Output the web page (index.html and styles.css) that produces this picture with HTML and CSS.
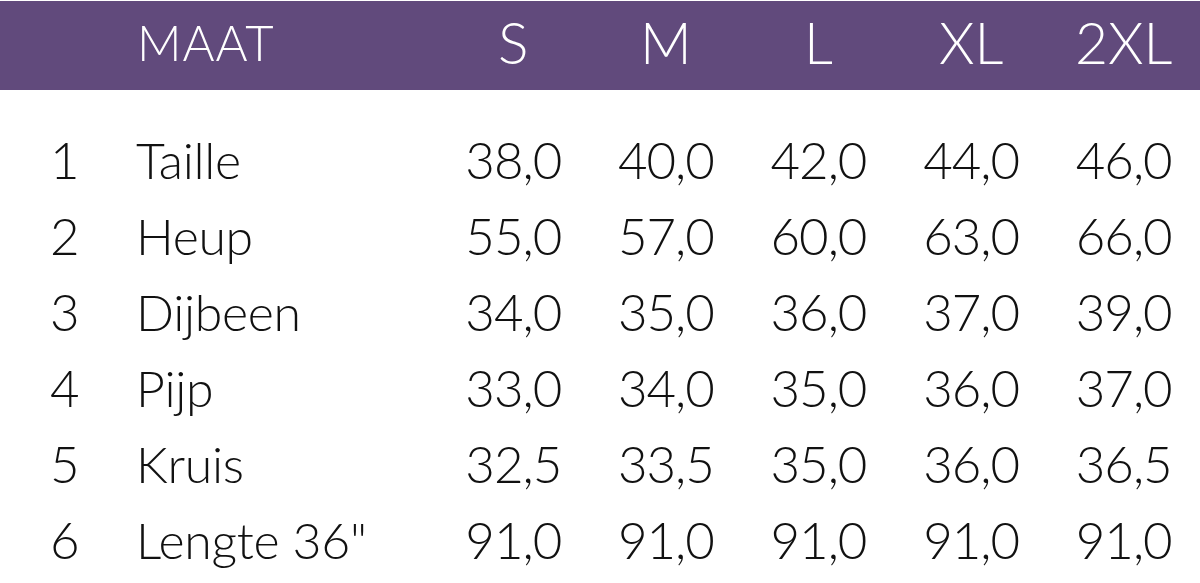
FILE: index.html
```html
<!DOCTYPE html>
<html lang="nl">
<head>
<meta charset="utf-8">
<link rel="stylesheet" href="styles.css">
</head>
<body>
<div class="chart">
  <div class="head">
    <div class="idx"></div>
    <div class="lbl">MAAT</div>
    <div class="sz">S</div>
    <div class="sz">M</div>
    <div class="sz">L</div>
    <div class="sz">XL</div>
    <div class="sz">2XL</div>
  </div>
  <div class="body">
    <div class="row"><div class="idx">1</div><div class="lbl">Taille</div><div class="v">38,0</div><div class="v">40,0</div><div class="v">42,0</div><div class="v">44,0</div><div class="v">46,0</div></div>
    <div class="row"><div class="idx">2</div><div class="lbl">Heup</div><div class="v">55,0</div><div class="v">57,0</div><div class="v">60,0</div><div class="v">63,0</div><div class="v">66,0</div></div>
    <div class="row"><div class="idx">3</div><div class="lbl">Dijbeen</div><div class="v">34,0</div><div class="v">35,0</div><div class="v">36,0</div><div class="v">37,0</div><div class="v">39,0</div></div>
    <div class="row"><div class="idx">4</div><div class="lbl">Pijp</div><div class="v">33,0</div><div class="v">34,0</div><div class="v">35,0</div><div class="v">36,0</div><div class="v">37,0</div></div>
    <div class="row"><div class="idx">5</div><div class="lbl">Kruis</div><div class="v">32,5</div><div class="v">33,5</div><div class="v">35,0</div><div class="v">36,0</div><div class="v">36,5</div></div>
    <div class="row"><div class="idx">6</div><div class="lbl">Lengte 36"</div><div class="v">91,0</div><div class="v">91,0</div><div class="v">91,0</div><div class="v">91,0</div><div class="v">91,0</div></div>
  </div>
</div>
</body>
</html>
```
FILE: styles.css
```css
html, body {
  margin: 0;
  padding: 0;
  background: #ffffff;
}
body {
  font-family: "Lato", "Liberation Sans", sans-serif;
  font-weight: 300;
  color: #111111;
  width: 1200px;
  height: 583px;
  overflow: hidden;
}
.chart {
  padding-top: 1px;
  background: #ffffff;
}
.head, .row {
  display: grid;
  grid-template-columns: 137px 300px repeat(5, 1fr);
  align-items: center;
}
.head {
  background: #614a7c;
  color: #ffffff;
  height: 89px;
}
.head .lbl {
  font-size: 49px;
  line-height: 89px;
  letter-spacing: 1px;
  margin-top: -6px;
}
.head .sz {
  text-align: center;
  font-size: 57px;
  line-height: 89px;
  margin-top: -6px;
}
.body {
  padding-top: 32px;
}
.row {
  height: 76px;
  font-size: 51px;
  line-height: 76px;
}
.row .idx {
  padding-left: 50px;
}
.row .lbl {
  white-space: nowrap;
  font-size: 50px;
  letter-spacing: -0.3px;
  margin-left: -1px;
}
.row .v {
  text-align: center;
  letter-spacing: -1px;
}
```
